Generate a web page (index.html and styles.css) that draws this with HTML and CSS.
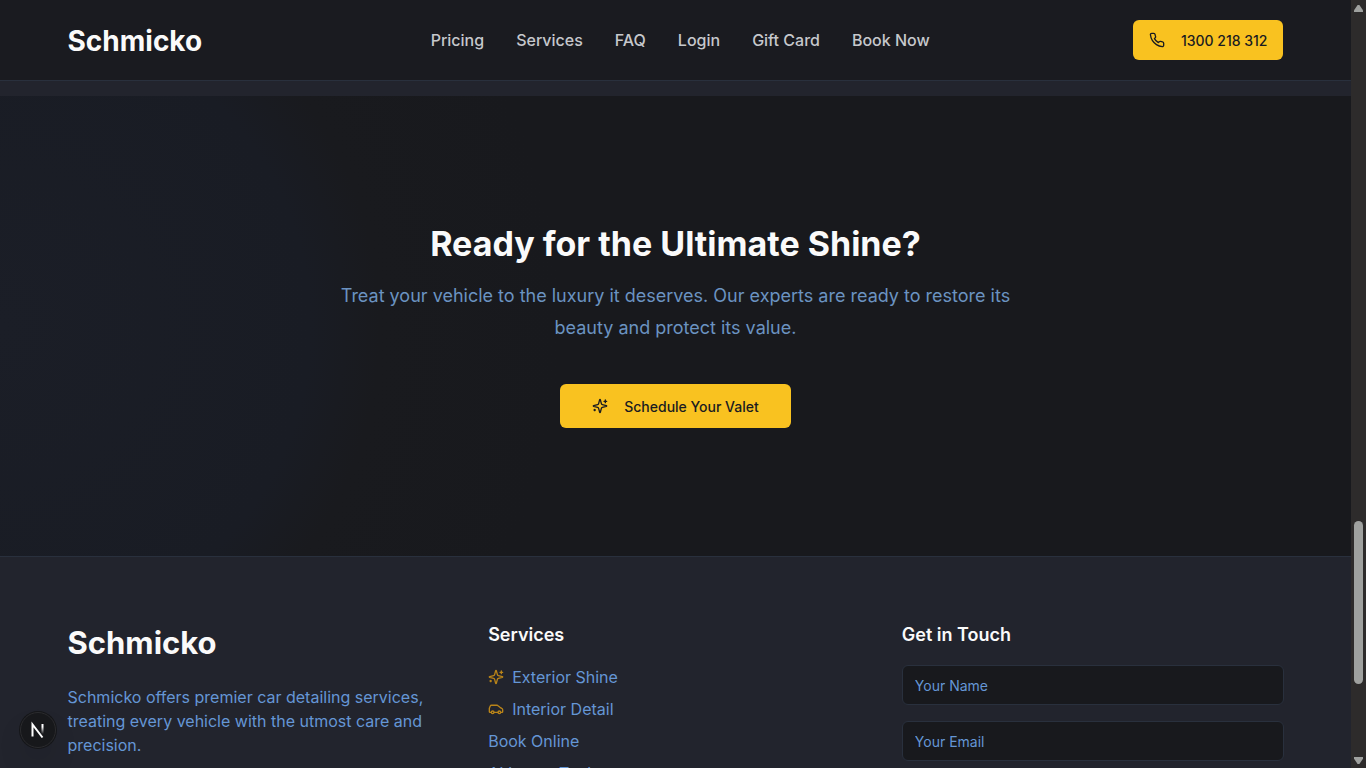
FILE: index.html
```html
<!DOCTYPE html>
<html lang="en">
<head>
    <meta charset="UTF-8">
    <meta name="viewport" content="width=device-width, initial-scale=1.0">
    <title>Schmicko</title>
    <link rel="stylesheet" href="styles.css">
</head>
<body>

<div class="page">
    <header class="header">
        <div class="container header-inner">
            <a class="logo" href="#">Schmicko</a>
            <nav class="nav">
                <a href="#">Pricing</a>
                <a href="#">Services</a>
                <a href="#">FAQ</a>
                <a href="#">Login</a>
                <a href="#">Gift Card</a>
                <a href="#">Book Now</a>
            </nav>
            <button class="btn" type="button">
                <svg class="icon" viewBox="0 0 24 24"><path d="M22 16.92v3a2 2 0 0 1-2.18 2 19.79 19.79 0 0 1-8.63-3.07 19.5 19.5 0 0 1-6-6 19.79 19.79 0 0 1-3.07-8.67A2 2 0 0 1 4.11 2h3a2 2 0 0 1 2 1.72 12.84 12.84 0 0 0 .7 2.81 2 2 0 0 1-.45 2.11L8.09 9.91a16 16 0 0 0 6 6l1.27-1.27a2 2 0 0 1 2.11-.45 12.84 12.84 0 0 0 2.81.7A2 2 0 0 1 22 16.92z"/></svg>
                1300 218 312
            </button>
        </div>
    </header>

    <main>
        <section class="cta">
            <h2>Ready for the Ultimate Shine?</h2>
            <p>Treat your vehicle to the luxury it deserves. Our experts are ready to restore its beauty and protect its value.</p>
            <button class="btn btn-lg" type="button">
                <svg class="icon" viewBox="0 0 24 24"><path d="M9.937 15.5A2 2 0 0 0 8.5 14.063l-6.135-1.582a.5.5 0 0 1 0-.962L8.5 9.936A2 2 0 0 0 9.937 8.5l1.582-6.135a.5.5 0 0 1 .963 0L14.063 8.5A2 2 0 0 0 15.5 9.937l6.135 1.581a.5.5 0 0 1 0 .964L15.5 14.063a2 2 0 0 0-1.437 1.437l-1.582 6.135a.5.5 0 0 1-.963 0z"/><path d="M20 3v4M22 5h-4M4 17v2M5 18H3"/></svg>
                Schedule Your Valet
            </button>
        </section>
    </main>

    <footer class="footer">
        <div class="container footer-grid">
            <div>
                <a class="logo logo-lg" href="#">Schmicko</a>
                <p class="about">Schmicko offers premier car detailing services, treating every vehicle with the utmost care and precision.</p>
            </div>
            <div>
                <h3>Services</h3>
                <ul class="links">
                    <li><a href="#">
                        <svg class="icon" viewBox="0 0 24 24"><path d="M9.937 15.5A2 2 0 0 0 8.5 14.063l-6.135-1.582a.5.5 0 0 1 0-.962L8.5 9.936A2 2 0 0 0 9.937 8.5l1.582-6.135a.5.5 0 0 1 .963 0L14.063 8.5A2 2 0 0 0 15.5 9.937l6.135 1.581a.5.5 0 0 1 0 .964L15.5 14.063a2 2 0 0 0-1.437 1.437l-1.582 6.135a.5.5 0 0 1-.963 0z"/><path d="M20 3v4M22 5h-4M4 17v2M5 18H3"/></svg>
                        Exterior Shine</a></li>
                    <li><a href="#">
                        <svg class="icon" viewBox="0 0 24 24"><path d="M19 17h2c.6 0 1-.4 1-1v-3c0-.9-.7-1.700-1.500-1.900L18 9.500 15 7c-.3-.3-.9-.6-1.400-.6H5.200c-.8 0-1.500.5-1.800 1.200L2 11v5c0 .6.400 1 1 1h2"/><circle cx="7" cy="17" r="2"/><path d="M9 17h6"/><circle cx="17" cy="17" r="2"/></svg>
                        Interior Detail</a></li>
                    <li><a href="#">Book Online</a></li>
                    <li><a href="#">AI Image Tool</a></li>
                </ul>
            </div>
            <form>
                <h3>Get in Touch</h3>
                <input type="text" placeholder="Your Name" aria-label="Your Name">
                <input type="email" placeholder="Your Email" aria-label="Your Email">
            </form>
        </div>
    </footer>
</div>

<div class="scrollbar">
    <span class="arrow-up"></span>
    <div class="track"><div class="thumb"></div></div>
    <span class="arrow-down"></span>
</div>

<button class="dev-badge" type="button" aria-label="Open dev tools">
    <svg viewBox="0 0 34 34">
        <defs>
            <linearGradient id="fade" gradientUnits="userSpaceOnUse" x1="0" y1="11" x2="0" y2="21">
                <stop offset="0.3" stop-color="#fff"/>
                <stop offset="1" stop-color="#fff" stop-opacity="0"/>
            </linearGradient>
        </defs>
        <path d="M11.500 23.500V11.500L21.500 24.500"/>
        <path d="M21.500 11v10" stroke="url(#fade)"/>
    </svg>
</button>

</body>
</html>
```

FILE: styles.css
```css
* {
    box-sizing: border-box;
    margin: 0;
    padding: 0;
}
body {
    display: flex;
    height: 100vh;
    overflow: hidden;
    background-color: #22242d;
    color: #fafafa;
    font-family: Inter, sans-serif;
    font-size: 16px;
    line-height: 24px;
}
a {
    color: inherit;
    text-decoration: none;
}
.page {
    flex: 1;
    overflow: hidden;
}
.container {
    max-width: 1280px;
    margin: 0 auto;
    padding: 0 32px;
}
.header {
    background-color: #1a1b20;
    border-bottom: 1px solid #29303d;
    margin-bottom: 15px;
}
.header-inner {
    display: flex;
    align-items: center;
    justify-content: space-between;
    height: 80px;
}
.logo {
    display: block;
    min-width: 160px;
    padding-top: 2px;
    font-size: 28px;
    line-height: 40px;
    font-weight: 700;
}
.logo-lg {
    padding-top: 0;
    font-size: 31px;
    line-height: 44px;
}
.nav {
    display: flex;
    gap: 32px;
    color: #c6c8cc;
    font-weight: 500;
}
.btn {
    display: inline-flex;
    align-items: center;
    gap: 16px;
    height: 40px;
    padding: 0 16px;
    border: none;
    border-radius: 6px;
    background-color: #f9c220;
    color: #1a1b20;
    font: 500 14px Inter, sans-serif;
    cursor: pointer;
}
.btn-lg {
    height: 44px;
    padding: 0 32px;
}
.icon {
    flex: none;
    width: 16px;
    height: 16px;
    fill: none;
    stroke: currentColor;
    stroke-width: 2;
    stroke-linecap: round;
    stroke-linejoin: round;
}
.cta {
    padding: 128px 32px;
    text-align: center;
    background: radial-gradient(circle at 0 50%, #1b1e27 0, #191c24 310px, #191a1e 380px, #18191d 560px);
}
.cta h2 {
    font-size: 34px;
    line-height: 40px;
    font-weight: 700;
}
.cta p {
    max-width: 672px;
    margin: 16px auto 40px;
    color: #6b93c1;
    font-size: 18px;
    line-height: 32px;
}
.footer {
    padding: 64px 0;
    border-top: 1px solid #29303d;
}
.footer-grid {
    display: grid;
    grid-template-columns: 373fr 366fr 382fr;
    gap: 48px;
}
.footer h3 {
    margin-bottom: 16px;
    font-size: 18px;
    line-height: 28px;
    font-weight: 600;
}
.about {
    margin-top: 20px;
    color: #6596d5;
}
.links {
    display: grid;
    gap: 8px;
    list-style: none;
    color: #6596d5;
}
.links a {
    display: flex;
    align-items: center;
    gap: 8px;
}
.links .icon {
    color: #b98419;
}
.footer input {
    display: block;
    width: 100%;
    height: 40px;
    margin-bottom: 16px;
    padding: 0 12px;
    border: 1px solid #29303d;
    border-radius: 6px;
    background-color: #18191d;
    color: #fafafa;
    font: 14px Inter, sans-serif;
}
.footer input::placeholder {
    color: #6596d5;
}

/* scrollbar */
.scrollbar {
    display: flex;
    flex-direction: column;
    align-items: center;
    justify-content: space-between;
    width: 15px;
    padding: 5px 0 4px;
    background-color: #2d2b2b;
}
.arrow-up, .arrow-down {
    width: 9px;
    height: 7px;
    background-color: #9fa19f;
    clip-path: polygon(40% 0, 60% 0, 100% 75%, 100% 100%, 0 100%, 0 75%);
}
.arrow-down {
    clip-path: polygon(0 0, 100% 0, 100% 25%, 60% 100%, 40% 100%, 0 25%);
}
.track {
    display: grid;
    grid-template-rows: 509fr 163fr 73fr;
    flex: 1;
    width: 9px;
}
.thumb {
    grid-row: 2;
    border-radius: 5px;
    background-color: #9fa19f;
}

.dev-badge {
    position: fixed;
    left: 20px;
    bottom: 20px;
    width: 36px;
    height: 36px;
    border: 1px solid #2b2b2e;
    border-radius: 50%;
    background-color: #17181b;
    box-shadow: 0 0 0 1px #151619, 0 16px 32px -8px rgba(0, 0, 0, 0.24);
    cursor: pointer;
}
.dev-badge svg {
    display: block;
    width: 100%;
    fill: none;
    stroke: #fff;
    stroke-width: 2;
}
```
